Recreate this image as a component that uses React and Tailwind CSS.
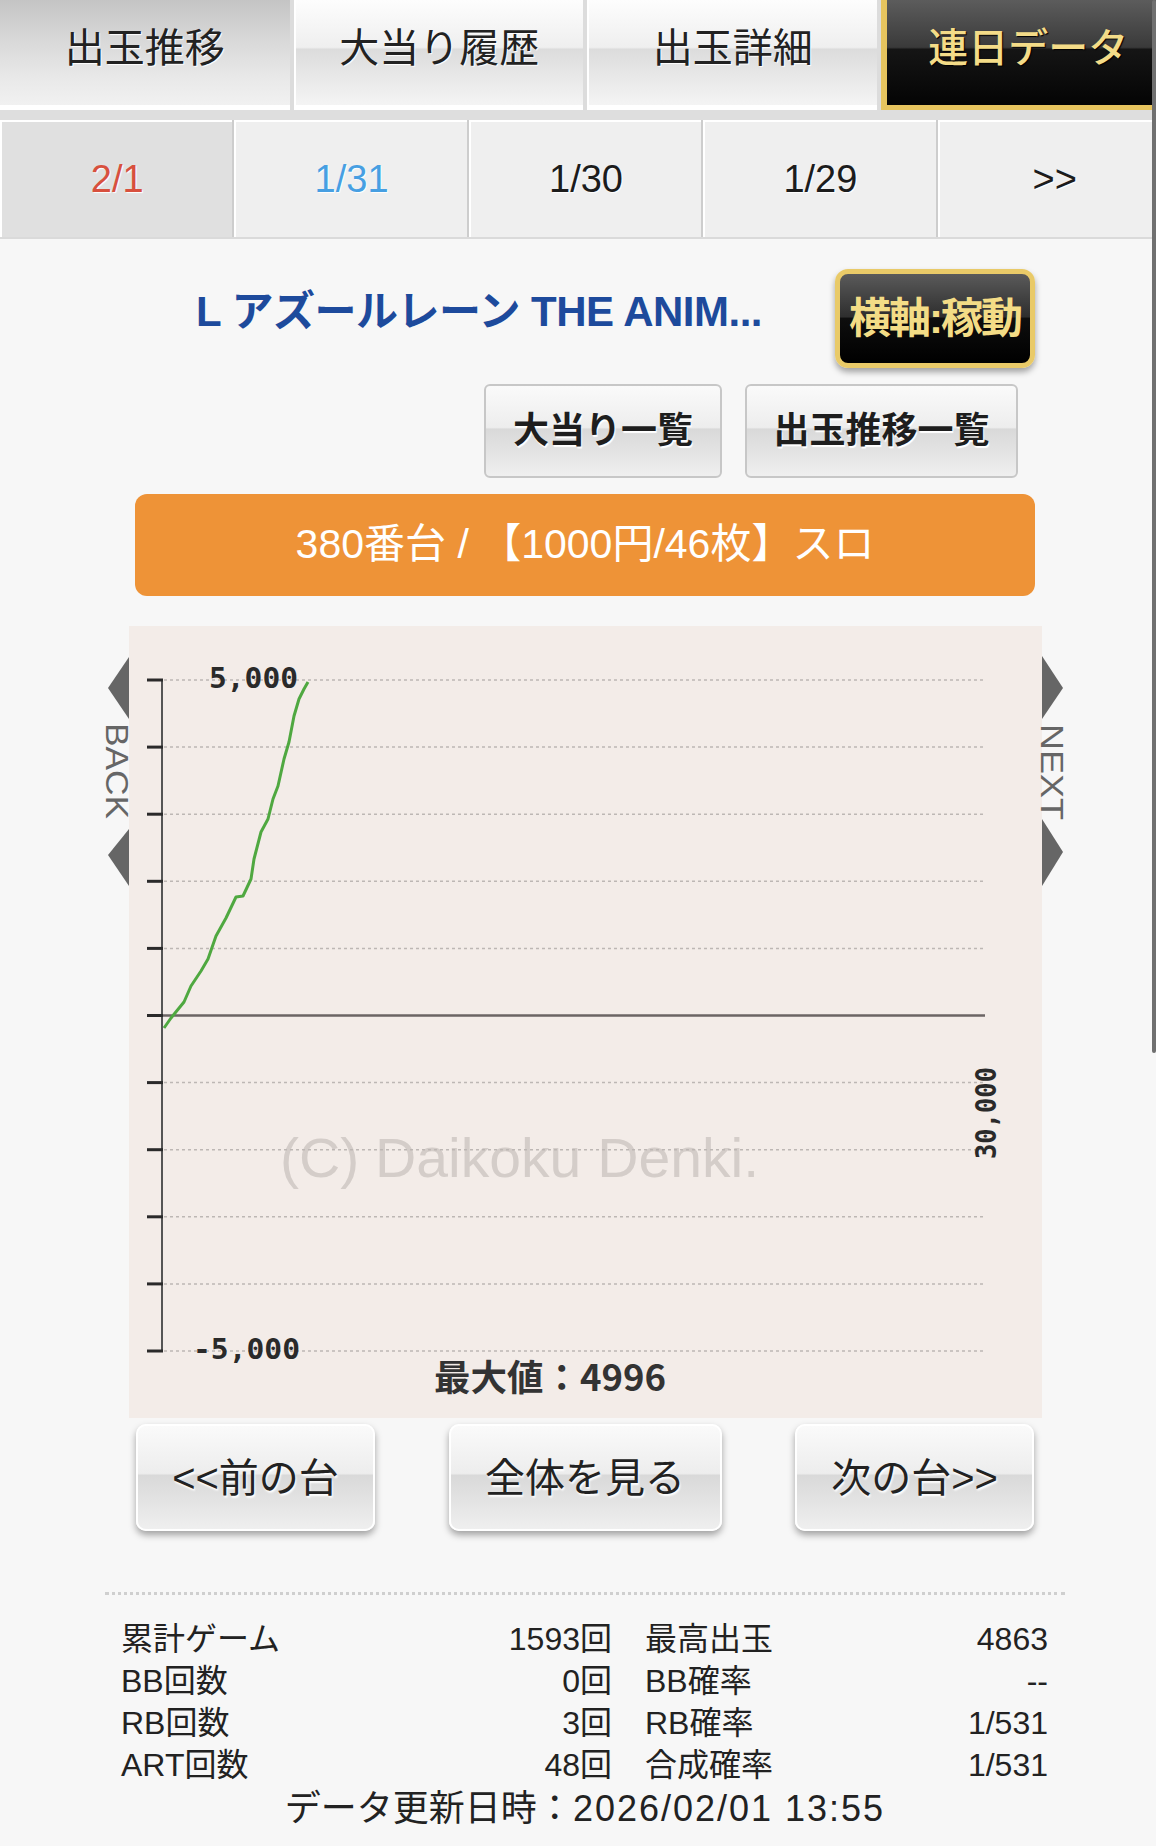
import React from 'react';

const tabs = [
  { label: '出玉推移', kind: 'pressed' },
  { label: '大当り履歴', kind: 'normal' },
  { label: '出玉詳細', kind: 'normal' },
  { label: '連日データ', kind: 'active' },
];

const tabStyles = {
  pressed:
    'bg-[linear-gradient(to_bottom,#c4c4c4_0%,#d9d9d9_40%,#e9e9e9_75%,#f1f1f1_100%)] border-b-[5px] border-white text-[#222] [text-shadow:1px_1px_1px_#fff]',
  normal:
    'bg-[linear-gradient(to_bottom,#fdfdfd_0%,#efefef_45%,#dcdcdc_47%,#e9e9e9_75%,#f4f4f4_100%)] border-l-2 border-b-[5px] border-white text-[#222] [text-shadow:1px_1px_1px_#fff]',
  active:
    'bg-[linear-gradient(to_bottom,#5c5c5c_0%,#3a3a3a_45%,#151515_47%,#040404_100%)] border-l-[6px] border-b-[5px] border-[#e6c45e] text-[#f4dc88] font-medium [text-shadow:1px_1px_1px_#000]',
};

const dates = [
  { label: '2/1', cls: 'text-[#d8503e] bg-[#e0e0e0]' },
  { label: '1/31', cls: 'text-[#479fe2] bg-[#efefef]' },
  { label: '1/30', cls: 'text-[#1c1c1c] bg-[#efefef]' },
  { label: '1/29', cls: 'text-[#1c1c1c] bg-[#efefef]' },
  { label: '>>', cls: 'text-[#1c1c1c] bg-[#efefef]' },
];

const stats = [
  ['累計ゲーム', '1593回', '最高出玉', '4863'],
  ['BB回数', '0回', 'BB確率', '--'],
  ['RB回数', '3回', 'RB確率', '1/531'],
  ['ART回数', '48回', '合成確率', '1/531'],
];

// slump graph trace, chart-local coords
const trace = [
  [35, 402], [42, 392], [55, 376], [62, 360], [72, 345], [79, 333], [87, 310], [97, 292],
  [107, 271], [114, 270], [122, 253], [125, 233], [132, 206], [139, 193], [144, 173],
  [149, 160], [155, 133], [160, 116], [165, 90], [170, 73], [175, 63], [179, 56],
];

const gloss =
  'bg-[linear-gradient(to_bottom,#fafafa_0%,#ededed_46%,#d9d9d9_48%,#e4e4e4_75%,#efefef_100%)]';

function Chart() {
  const ys = Array.from({ length: 11 }, (_, i) => 54 + i * 67.1);
  return (
    <svg width="913" height="792" viewBox="0 0 913 792" className="block">
      <rect width="913" height="792" fill="#f3ece8" />
      <text
        x="151"
        y="551"
        fontFamily="Liberation Sans, sans-serif"
        fontSize="56"
        fill="#d4cdc9"
        textLength="479"
        lengthAdjust="spacingAndGlyphs"
      >
        (C) Daikoku Denki.
      </text>
      {ys.map((y, i) =>
        i === 5 ? null : (
          <line key={i} x1="35" x2="856" y1={y} y2={y} stroke="#bdb7b4" strokeWidth="1.5" strokeDasharray="3 3" />
        )
      )}
      <line x1="33" x2="856" y1={ys[5]} y2={ys[5]} stroke="#6b6564" strokeWidth="2.5" />
      <line x1="33" x2="33" y1={ys[0] - 1} y2={ys[10] + 1} stroke="#555" strokeWidth="2" />
      {ys.map((y, i) => (
        <line key={i} x1="18" x2="34" y1={y} y2={y} stroke="#2a2a2a" strokeWidth="3" />
      ))}
      <text x="80" y="62" fontFamily="DejaVu Sans Mono, monospace" fontSize="29" fontWeight="700" fill="#2a2a2a" textLength="89" lengthAdjust="spacingAndGlyphs">
        5,000
      </text>
      <text x="64" y="733" fontFamily="DejaVu Sans Mono, monospace" fontSize="29" fontWeight="700" fill="#2a2a2a" textLength="107" lengthAdjust="spacingAndGlyphs">
        -5,000
      </text>
      <text
        transform="translate(867 487) rotate(-90)"
        textAnchor="middle"
        fontFamily="DejaVu Sans Mono, monospace"
        fontSize="28"
        fontWeight="700"
        fill="#2a2a2a"
        textLength="92"
        lengthAdjust="spacingAndGlyphs"
      >
        30,000
      </text>
      <polyline
        points={trace.map((p) => p.join(',')).join(' ')}
        fill="none"
        stroke="#4fa840"
        strokeWidth="3"
        strokeLinejoin="round"
      />
      <text x="305" y="765" fontFamily="Noto Sans CJK JP, sans-serif" fontSize="36" fontWeight="700" fill="#333" textLength="232" lengthAdjust="spacingAndGlyphs">
        最大値：4996
      </text>
    </svg>
  );
}

function SideNav({ side }) {
  const left = side === 'left';
  return (
    <svg width="22" height="792" viewBox="0 0 22 792" overflow="visible" className="block overflow-visible">
      {left ? (
        <>
          <polygon points="22,31 1,62 22,93" fill="#666" />
          <polygon points="22,203 1,229 22,260" fill="#666" />
        </>
      ) : (
        <>
          <polygon points="0,30 21,62 0,93" fill="#666" />
          <polygon points="0,193 21,226 0,260" fill="#666" />
        </>
      )}
      <text
        transform={`translate(${left ? -1 : -1} ${left ? 145 : 146}) rotate(90)`}
        textAnchor="middle"
        fontFamily="Liberation Sans, sans-serif"
        fontSize="31"
        fill="#666"
        textLength="96"
        lengthAdjust="spacingAndGlyphs"
      >
        {left ? 'BACK' : 'NEXT'}
      </text>
    </svg>
  );
}

export default function App() {
  return (
    <div className="relative w-full min-h-[1846px] overflow-hidden bg-[#f7f7f7] font-[family-name:'Liberation_Sans','Noto_Sans_CJK_JP',sans-serif]">
      <div className="w-[1170px]">
        {/* top tabs */}
        <div className="grid h-[110px] grid-cols-4 gap-[4px] bg-[#dcdcdc]">
          {tabs.map((t) => (
            <div key={t.label} className={`flex items-center justify-center pb-[10px] text-[40px] ${tabStyles[t.kind]}`}>
              {t.label}
            </div>
          ))}
        </div>
        <div className="h-[10px] bg-[#dedede]" />

        {/* date row */}
        <div className="grid h-[119px] grid-cols-5 gap-[2px] border-b-2 border-[#dadada] bg-[#cdcdcd]">
          {dates.map((d) => (
            <div
              key={d.label}
              className={`flex items-center justify-center border-t-2 border-l-2 border-white text-[38px] [text-shadow:1px_1px_1px_#fff] ${d.cls}`}
            >
              {d.label}
            </div>
          ))}
        </div>

        <div className="mx-auto w-[900px]">
          {/* title row */}
          <div className="mt-[30px] flex h-[99px] items-center">
            <div className="mb-[14px] flex-1 pr-[12px] text-center text-[42px] font-bold tracking-[-0.5px] text-[#1d4a9c]">
              L アズールレーン THE ANIM...
            </div>
            <div className="flex h-[99px] w-[200px] items-center justify-center rounded-[13px] border-[5px] border-[#e9ca68] bg-[linear-gradient(to_bottom,#5a5a5a_0%,#2e2e2e_48%,#0e0e0e_50%,#000_100%)] text-[42px] font-bold tracking-[-2px] text-[#f3dc86] shadow-[0_4px_6px_rgba(0,0,0,0.35)]">
              横軸:稼動
            </div>
          </div>

          {/* list buttons */}
          <div className="mt-[16px] flex h-[94px] justify-end gap-[23px] pr-[17px]">
            <div className={`flex w-[238px] items-center justify-center rounded-[6px] border-2 border-[#c7c7c7] text-[36px] font-bold text-[#1e1e1e] [text-shadow:1px_2px_1px_#fff] ${gloss}`}>
              大当り一覧
            </div>
            <div className={`flex w-[273px] items-center justify-center rounded-[6px] border-2 border-[#c7c7c7] text-[36px] font-bold text-[#1e1e1e] [text-shadow:1px_2px_1px_#fff] ${gloss}`}>
              出玉推移一覧
            </div>
          </div>

          {/* machine bar */}
          <div className="mt-[16px] flex h-[102px] items-center justify-center rounded-[12px] bg-[#ee9337] text-[41px] text-white">
            380番台 / 【1000円/46枚】スロ
          </div>
        </div>

        {/* chart */}
        <div className="mt-[30px] flex justify-center">
          <SideNav side="left" />
          <Chart />
          <SideNav side="right" />
        </div>

        {/* prev / all / next */}
        <div className="mx-auto mt-[6px] flex h-[107px] w-[898px] justify-between">
          {[
            ['<<前の台', 'w-[239px]'],
            ['全体を見る', 'w-[273px]'],
            ['次の台>>', 'w-[239px]'],
          ].map(([label, w]) => (
            <div
              key={label}
              className={`flex items-center justify-center rounded-[10px] border-2 border-white text-[40px] text-[#222] shadow-[0_4px_7px_rgba(0,0,0,0.35)] [text-shadow:1px_2px_2px_#fff] ${w} ${gloss}`}
            >
              {label}
            </div>
          ))}
        </div>

        <div className="mx-auto mt-[61px] w-[960px] border-t-[3px] border-dotted border-[#cfcfcf]" />

        {/* stats */}
        <div className="mx-auto mt-[23px] w-[960px] pl-[16px] text-[32px] leading-[42px] text-[#222]">
          {stats.map(([a, b, c, d]) => (
            <div key={a} className="flex">
              <div className="flex w-[491px] justify-between">
                <span>{a}</span>
                <span>{b}</span>
              </div>
              <div className="ml-[33px] flex w-[403px] justify-between">
                <span>{c}</span>
                <span>{d}</span>
              </div>
            </div>
          ))}
        </div>
        <div className="mt-[1px] text-center text-[36px] leading-[44px] text-[#222]">
          データ更新日時：<span className="tracking-[2px]">2026/02/01 13:55</span>
        </div>
      </div>

      {/* scroll indicator */}
      <div className="absolute right-0 top-0 h-[1053px] w-[4px] rounded-full bg-[#707070]" />
    </div>
  );
}
